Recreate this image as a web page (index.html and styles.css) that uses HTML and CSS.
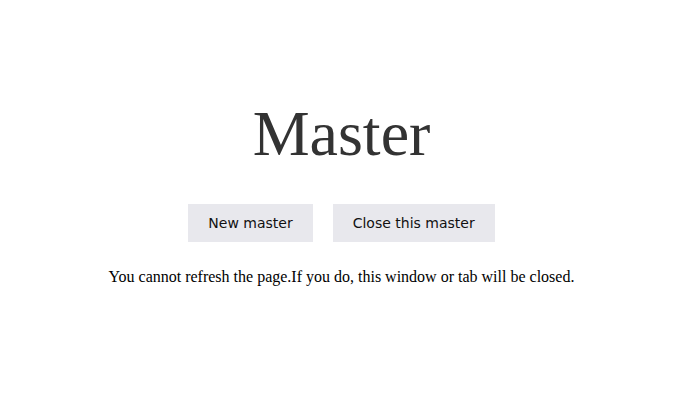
FILE: index.html
```html
<!DOCTYPE html>
<html>
<head>
<meta charset="utf-8">
<link rel="stylesheet" href="styles.css">
</head>
<body>
<main class="page">
  <h1 class="title">Master</h1>
  <div class="actions">
    <button class="btn">New master</button>
    <button class="btn">Close this master</button>
  </div>
  <p class="note">You cannot refresh the page.If you do, this window or tab will be closed.</p>
</main>
</body>
</html>
```
FILE: styles.css
```css
html, body {
  margin: 0;
  padding: 0;
  background: #ffffff;
}
.page {
  display: flex;
  flex-direction: column;
  align-items: center;
  padding-top: 96px;
}
.title {
  margin: 0;
  font-family: "Liberation Serif", "Times New Roman", serif;
  font-weight: normal;
  font-size: 64px;
  line-height: 76px;
  color: #333333;
}
.actions {
  display: flex;
  gap: 20px;
  margin-top: 32px;
}
.btn {
  border: none;
  background: #e8e8ed;
  font-family: "DejaVu Sans", sans-serif;
  font-size: 14px;
  color: #111111;
  height: 38px;
  padding: 0 20px;
  margin: 0;
}
.note {
  margin: 26px 0 0;
  font-family: "Liberation Serif", "Times New Roman", serif;
  font-size: 16px;
  color: #000000;
}
```
